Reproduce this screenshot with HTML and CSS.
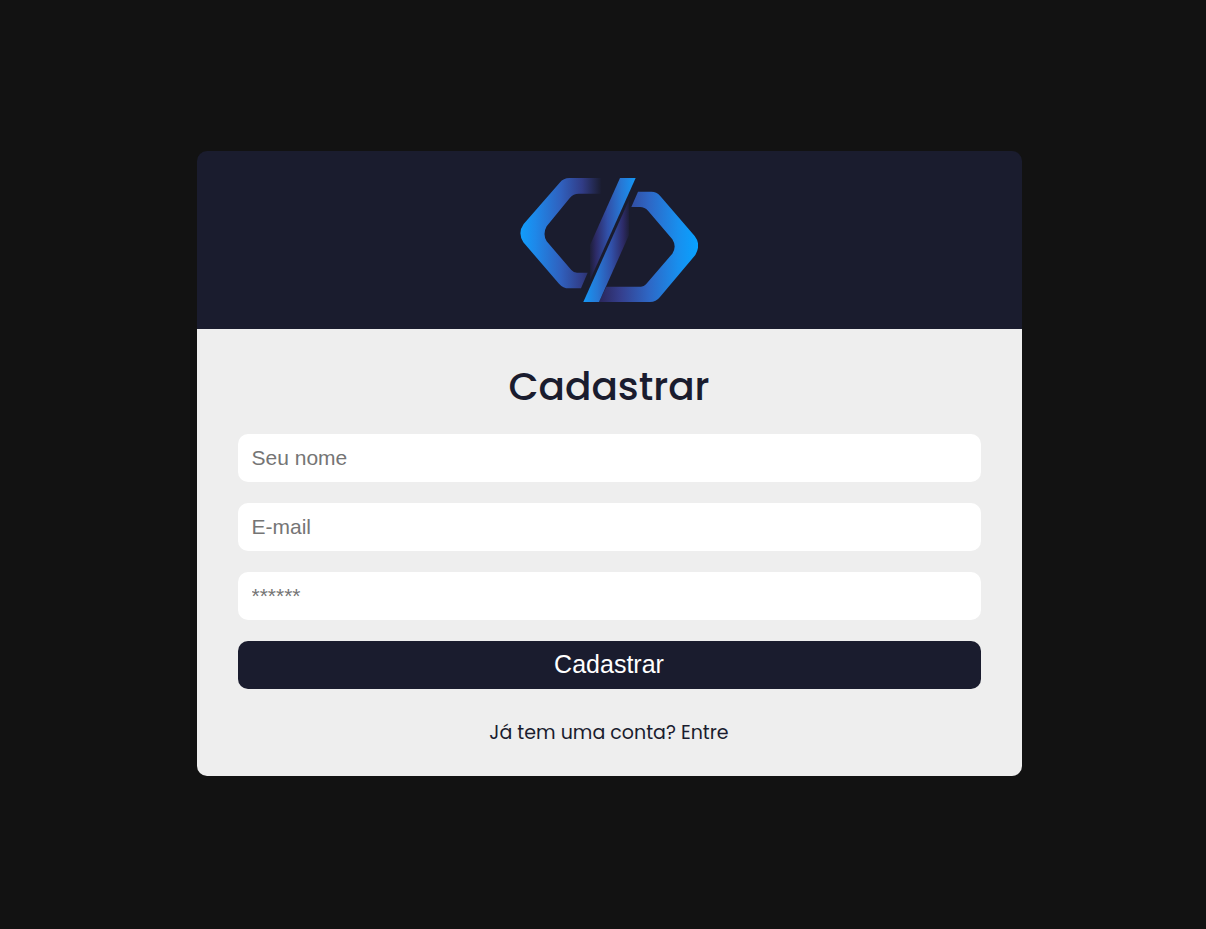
FILE: index.html
```html
<!DOCTYPE html>
<html lang="pt-BR">
<head>
  <meta charset="utf-8">
  <meta name="viewport" content="width=device-width, initial-scale=1">
  <title>Cadastrar</title>
  <link rel="stylesheet" href="styles.css">
</head>
<body class="page">
  <main class="card">
    <header class="card-header">
      <svg class="logo" viewBox="30 39 534 372" aria-hidden="true">
        <defs>
          <linearGradient id="left" gradientUnits="userSpaceOnUse" x1="32" y1="0" x2="275" y2="0">
            <stop offset="0" stop-color="#119dfb"/>
            <stop offset=".18" stop-color="#1e88e9"/>
            <stop offset=".5" stop-color="#3060bd"/>
            <stop offset=".76" stop-color="#313c86"/>
            <stop offset="1" stop-color="#1a1c2e"/>
          </linearGradient>
          <linearGradient id="right" gradientUnits="userSpaceOnUse" x1="564" y1="0" x2="270" y2="0">
            <stop offset="0" stop-color="#08a2ff"/>
            <stop offset=".2" stop-color="#188fee"/>
            <stop offset=".5" stop-color="#2e67c5"/>
            <stop offset=".78" stop-color="#35408f"/>
            <stop offset="1" stop-color="#2b275c"/>
          </linearGradient>
          <linearGradient id="upper" gradientUnits="userSpaceOnUse" x1="377" y1="0" x2="236" y2="0">
            <stop offset="0" stop-color="#1498f6"/>
            <stop offset=".3" stop-color="#2778d5"/>
            <stop offset=".6" stop-color="#3150a8"/>
            <stop offset=".84" stop-color="#2d2b68"/>
            <stop offset="1" stop-color="#1a1c2e"/>
          </linearGradient>
          <linearGradient id="lower" gradientUnits="userSpaceOnUse" x1="220" y1="0" x2="361" y2="0">
            <stop offset="0" stop-color="#1498f6"/>
            <stop offset=".3" stop-color="#2778d5"/>
            <stop offset=".6" stop-color="#3150a8"/>
            <stop offset=".84" stop-color="#2d2b68"/>
            <stop offset="1" stop-color="#1a1c2e"/>
          </linearGradient>
        </defs>
        <path fill="url(#left)" d="M275 39H178Q161 39 149 53L41 177Q22 203 40 232L147 356Q159 370 177 370H213L233 323H201Q191 323 184 315L110 229Q97 207 110 184L180 98Q190 86 206 86H275Z"/>
        <path fill="url(#right)" d="M384 80H424Q440 80 450 92L554 213Q574 239 556 270L450 396Q438 411 420 411H267L289 365H393Q402 365 408 358L487 266Q501 245 487 223L414 137Q404 126 390 126H364Z"/>
        <path fill="url(#upper)" d="M330 39H377L240 345V240Z"/>
        <path fill="url(#lower)" d="M220 411H267L357 210V105Z"/>
      </svg>
    </header>
    <section class="card-body">
      <h1 class="title">Cadastrar</h1>
      <form class="form">
        <input class="field" type="text" name="name" placeholder="Seu nome" aria-label="Seu nome">
        <input class="field" type="email" name="email" placeholder="E-mail" aria-label="E-mail">
        <input class="field" type="password" name="password" placeholder="******" aria-label="Senha">
        <button class="submit" type="submit">Cadastrar</button>
      </form>
      <a class="login-link" href="#">Já tem uma conta? Entre</a>
    </section>
  </main>
</body>
</html>
```
FILE: styles.css
```css
* {
  box-sizing: border-box;
}

.page {
  margin: 0;
  min-height: 100vh;
  padding: 16px 16px 18px 28px;
  display: flex;
  align-items: center;
  justify-content: center;
  background: #121212;
  color: #1a1c2e;
  font-family: Poppins, Inter, sans-serif;
}

.card {
  width: 100%;
  max-width: 825px;
  border-radius: 10px;
  overflow: hidden;
}

.card-header {
  display: flex;
  justify-content: center;
  padding: 27px;
  background: #1a1c2e;
}

.logo {
  display: block;
  width: 178px;
  height: 124px;
}

.card-body {
  display: flex;
  flex-direction: column;
  align-items: center;
  padding: 28px 41px;
  background: #eee;
}

.title {
  margin: 0 0 17px;
  font-size: 39px;
  line-height: 60px;
  font-weight: 500;
}

.form {
  width: 100%;
  display: flex;
  flex-direction: column;
  gap: 21px;
}

.field,
.submit {
  width: 100%;
  height: 48px;
  border: 0;
  border-radius: 10px;
  font-family: "Liberation Sans", Arial, sans-serif;
}

.field {
  padding: 0 14px;
  background: #fff;
  color: #1a1c2e;
  font-size: 21px;
}

.field::placeholder {
  color: #757575;
}

.submit {
  padding: 0 0 1px;
  background: #1a1c2e;
  color: #fff;
  font-size: 25px;
  cursor: pointer;
}

.login-link {
  margin-top: 29px;
  color: inherit;
  font-size: 19px;
  line-height: 30px;
  text-decoration: none;
}
```
